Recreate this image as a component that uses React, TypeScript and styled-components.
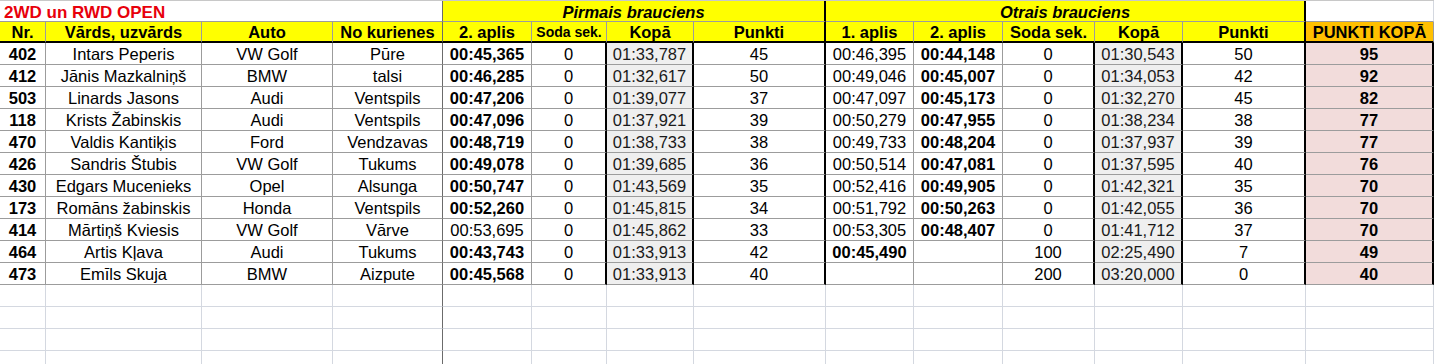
import styled, { createGlobalStyle } from 'styled-components'

type Edge = 'thin' | 'thick' | 'dark' | 'light'
type Shade = 'none' | 'kopa' | 'total'

const COLS = [46, 156, 131, 110, 89, 75, 87, 132, 88, 89, 92, 88, 123, 128]

const EDGE: Record<Edge, string> = {
  thin: '1px solid #9c9c9c',
  thick: '2px solid #000000',
  dark: '1px solid #6b6b6b',
  light: '1px solid #d4d8e0',
}

const SHADE: Record<Shade, string> = {
  none: '#ffffff',
  kopa: '#efefef',
  total: '#f2dcdb',
}

const HEAD_EDGES: Edge[] = ['thin', 'thin', 'thin', 'dark', 'thin', 'thin', 'thin', 'thick', 'thin', 'thin', 'thin', 'thin', 'thick', 'thin']
const DATA_EDGES: Edge[] = ['thin', 'thin', 'thin', 'dark', 'thin', 'thick', 'thick', 'thick', 'thin', 'thin', 'thick', 'thick', 'thick', 'thick']
const DATA_SHADES: Shade[] = ['none', 'none', 'none', 'none', 'none', 'none', 'kopa', 'none', 'none', 'none', 'none', 'kopa', 'none', 'total']
// which columns are bold by default
const BOLD_COLS = [0, 4, 9, 13]

const headers = ['Nr.', 'Vārds, uzvārds', 'Auto', 'No kurienes', '2. aplis', 'Soda sek.', 'Kopā', 'Punkti', '1. aplis', '2. aplis', 'Soda sek.', 'Kopā', 'Punkti', 'PUNKTI KOPĀ']

const rows: string[][] = [
  ['402', 'Intars Peperis', 'VW Golf', 'Pūre', '00:45,365', '0', '01:33,787', '45', '00:46,395', '00:44,148', '0', '01:30,543', '50', '95'],
  ['412', 'Jānis Mazkalniņš', 'BMW', 'talsi', '00:46,285', '0', '01:32,617', '50', '00:49,046', '00:45,007', '0', '01:34,053', '42', '92'],
  ['503', 'Linards Jasons', 'Audi', 'Ventspils', '00:47,206', '0', '01:39,077', '37', '00:47,097', '00:45,173', '0', '01:32,270', '45', '82'],
  ['118', 'Krists Žabinskis', 'Audi', 'Ventspils', '00:47,096', '0', '01:37,921', '39', '00:50,279', '00:47,955', '0', '01:38,234', '38', '77'],
  ['470', 'Valdis Kantiķis', 'Ford', 'Vendzavas', '00:48,719', '0', '01:38,733', '38', '00:49,733', '00:48,204', '0', '01:37,937', '39', '77'],
  ['426', 'Sandris Štubis', 'VW Golf', 'Tukums', '00:49,078', '0', '01:39,685', '36', '00:50,514', '00:47,081', '0', '01:37,595', '40', '76'],
  ['430', 'Edgars Mucenieks', 'Opel', 'Alsunga', '00:50,747', '0', '01:43,569', '35', '00:52,416', '00:49,905', '0', '01:42,321', '35', '70'],
  ['173', 'Romāns žabinskis', 'Honda', 'Ventspils', '00:52,260', '0', '01:45,815', '34', '00:51,792', '00:50,263', '0', '01:42,055', '36', '70'],
  ['414', 'Mārtiņš Kviesis', 'VW Golf', 'Vārve', '00:53,695', '0', '01:45,862', '33', '00:53,305', '00:48,407', '0', '01:41,712', '37', '70'],
  ['464', 'Artis Kļava', 'Audi', 'Tukums', '00:43,743', '0', '01:33,913', '42', '00:45,490', '', '100', '02:25,490', '7', '49'],
  ['473', 'Emīls Skuja', 'BMW', 'Aizpute', '00:45,568', '0', '01:33,913', '40', '', '', '200', '03:20,000', '0', '40'],
]

// odd cells that break the column's bold rule: [row:col]
const notBold = ['8:4']
const extraBold = ['9:8']

const App = () => {
  return (
    <>
      <GlobalStyle />
      <Sheet>
        <TitleCell>2WD un RWD OPEN</TitleCell>
        <GroupCell $span={4}>Pirmais brauciens</GroupCell>
        <GroupCell $span={5}>Otrais brauciens</GroupCell>
        <BlankTitle />

        {headers.map((h, i) => (
          <HeadCell key={h + i} $edge={HEAD_EDGES[i]} $small={i === 5} $orange={i === 13}>
            {h}
          </HeadCell>
        ))}

        {rows.map((r, ri) =>
          r.map((v, ci) => {
            const key = `${ri}:${ci}`
            const bold = (BOLD_COLS.includes(ci) && !notBold.includes(key)) || extraBold.includes(key)
            return (
              <DataCell key={key} $edge={DATA_EDGES[ci]} $shade={DATA_SHADES[ci]} $bold={bold}>
                {v}
              </DataCell>
            )
          })
        )}

        {Array.from({ length: 4 }).map((_, ri) =>
          COLS.map((_, ci) => <EmptyCell key={`e${ri}:${ci}`} $dark={ci === 3} />)
        )}
      </Sheet>
    </>
  )
}

export default App

const GlobalStyle = createGlobalStyle`
  html, body {
    margin: 0;
    padding: 0;
    background: #ffffff;
    overflow: hidden;
  }
  body {
    font-family: "Liberation Sans", Arial, sans-serif;
  }
`

const Sheet = styled.div`
  display: grid;
  grid-template-columns: ${COLS.map((w) => `${w}px`).join(' ')};
  grid-template-rows: 21px 21px repeat(15, 22px);
  width: 1434px;
  height: 364px;
  overflow: hidden;
  border-top: 1px solid #c8c8c8;
  box-sizing: border-box;
  font-family: "Liberation Sans", Arial, sans-serif;
  color: #000000;
`

const CellBase = styled.div`
  box-sizing: border-box;
  display: flex;
  align-items: center;
  justify-content: center;
  white-space: nowrap;
  overflow: hidden;
  font-size: 16.5px;
  line-height: 19px;
  padding-top: 2px;
`

const TitleCell = styled(CellBase)`
  grid-column: span 4;
  justify-content: flex-start;
  padding-left: 4px;
  color: #e8000b;
  font-weight: 700;
  font-size: 17px;
  border-right: ${EDGE.dark};
  border-bottom: ${EDGE.thin};
`

const GroupCell = styled(CellBase)<{ $span: number }>`
  grid-column: span ${(p) => p.$span};
  background: #ffff00;
  font-weight: 700;
  font-style: italic;
  border-right: ${EDGE.thick};
  border-bottom: ${EDGE.thin};
`

const BlankTitle = styled(CellBase)`
  border-right: ${EDGE.light};
  border-bottom: ${EDGE.thin};
`

const HeadCell = styled(CellBase)<{ $edge: Edge; $small?: boolean; $orange?: boolean }>`
  background: ${(p) => (p.$orange ? '#ffc000' : '#ffff00')};
  font-weight: 700;
  font-size: ${(p) => (p.$small ? '14px' : '16.5px')};
  border-right: ${(p) => EDGE[p.$edge]};
  border-bottom: 2px solid #000000;
`

const DataCell = styled(CellBase)<{ $edge: Edge; $shade: Shade; $bold: boolean }>`
  background: ${(p) => SHADE[p.$shade]};
  font-weight: ${(p) => (p.$bold ? 700 : 400)};
  color: ${(p) => (p.$shade === 'kopa' ? '#1a1a1a' : '#000000')};
  border-right: ${(p) => EDGE[p.$edge]};
  border-bottom: ${EDGE.thin};
`

const EmptyCell = styled.div<{ $dark: boolean }>`
  box-sizing: border-box;
  border-right: ${(p) => (p.$dark ? EDGE.dark : EDGE.light)};
  border-bottom: ${EDGE.light};
`
